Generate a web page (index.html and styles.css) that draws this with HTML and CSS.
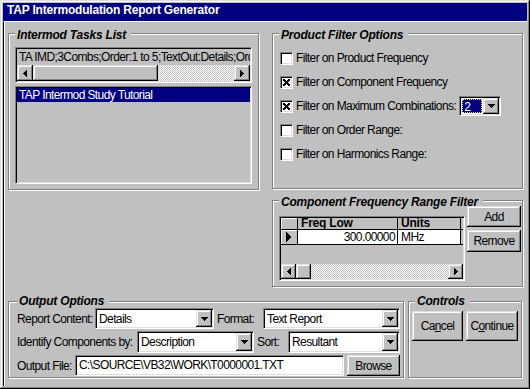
FILE: index.html
```html
<!DOCTYPE html>
<html lang="en">
  <head>
    <meta charset="UTF-8" />
    <meta name="viewport" content="width=device-width, initial-scale=1.0" />
    <title>TAP Intermodulation Report Generator</title>
    <link rel="stylesheet" href="styles.css">
  </head>
  <body>
    <div class="window">
      <div class="titlebar">TAP Intermodulation Report Generator</div>
      <div class="client">
        <div class="top-row">
          <!-- Tasks -->
          <fieldset class="group tasks">
            <legend>Intermod Tasks List</legend>
            <div class="task-line sunken">
              <div class="task-text">TA IMD;3Combs;Order:1 to 5;TextOut:Details;Order:1 to 5</div>
              <div class="hscroll">
                <span class="sb-btn"><svg width="4" height="7"><polygon points="4,0 4,7 0,3.5" /></svg></span>
                <span class="sb-thumb task-thumb"></span>
                <span class="sb-track"></span>
                <span class="sb-btn"><svg width="4" height="7"><polygon points="0,0 4,3.5 0,7" /></svg></span>
              </div>
            </div>
            <div class="task-list sunken">
              <div class="list-item selected">TAP Intermod Study Tutorial</div>
            </div>
          </fieldset>

          <div class="right-col">
            <!-- Product filters -->
            <fieldset class="group filters">
              <legend>Product Filter Options</legend>
              <div class="filter-list">
                <div class="filter-row"><span class="check"></span>Filter on Product Frequency</div>
                <div class="filter-row">
                  <span class="check"><svg width="7" height="7"><path d="M0 0L7 7M7 0L0 7" /></svg></span>Filter on Component Frequency
                </div>
                <div class="filter-row">
                  <span class="check"><svg width="7" height="7"><path d="M0 0L7 7M7 0L0 7" /></svg></span>Filter on Maximum Combinations:
                  <div class="combo combo-max">
                    <span class="combo-value"><span class="focus-val">2</span></span>
                    <span class="drop-btn"><svg width="7" height="4"><polygon points="0,0 7,0 3.5,4" /></svg></span>
                  </div>
                </div>
                <div class="filter-row"><span class="check"></span>Filter on Order Range:</div>
                <div class="filter-row"><span class="check"></span>Filter on Harmonics Range:</div>
              </div>
            </fieldset>

            <!-- Frequency range -->
            <fieldset class="group range">
              <legend>Component Frequency Range Filter</legend>
              <div class="range-body">
                <div class="grid">
                  <div class="grid-row head">
                    <span class="cell sel"></span>
                    <span class="cell freq">Freq Low</span>
                    <span class="cell units">Units</span>
                  </div>
                  <div class="grid-row data">
                    <span class="cell sel"><svg width="6" height="10"><polygon points="0,0 6,5 0,10" /></svg></span>
                    <span class="cell freq num">300.00000</span>
                    <span class="cell units">MHz</span>
                  </div>
                  <div class="grid-empty"></div>
                  <div class="hscroll grid-scroll">
                    <span class="sb-btn"><svg width="4" height="7"><polygon points="4,0 4,7 0,3.5" /></svg></span>
                    <span class="sb-thumb grid-thumb"></span>
                    <span class="sb-track"></span>
                    <span class="sb-btn"><svg width="4" height="7"><polygon points="0,0 4,3.5 0,7" /></svg></span>
                  </div>
                </div>
                <div class="range-buttons">
                  <button class="btn btn-add">Add</button>
                  <button class="btn btn-remove">Remove</button>
                </div>
              </div>
            </fieldset>
          </div>
        </div>

        <div class="bottom-row">
          <!-- Output -->
          <fieldset class="group output">
            <legend>Output Options</legend>
            <div class="out-rows">
              <div class="out-row row-1">
                <span class="lbl lbl-report">Report Content:</span>
                <div class="combo combo-report">
                  <span class="combo-value">Details</span>
                  <span class="drop-btn"><svg width="7" height="4"><polygon points="0,0 7,0 3.5,4" /></svg></span>
                </div>
                <span class="lbl lbl-format">Format:</span>
                <div class="combo combo-grow">
                  <span class="combo-value">Text Report</span>
                  <span class="drop-btn"><svg width="7" height="4"><polygon points="0,0 7,0 3.5,4" /></svg></span>
                </div>
              </div>
              <div class="out-row row-2">
                <span class="lbl lbl-ident">Identify Components by:</span>
                <div class="combo combo-ident">
                  <span class="combo-value">Description</span>
                  <span class="drop-btn"><svg width="7" height="4"><polygon points="0,0 7,0 3.5,4" /></svg></span>
                </div>
                <span class="lbl lbl-sort">Sort:</span>
                <div class="combo combo-grow">
                  <span class="combo-value">Resultant</span>
                  <span class="drop-btn"><svg width="7" height="4"><polygon points="0,0 7,0 3.5,4" /></svg></span>
                </div>
              </div>
              <div class="out-row row-3">
                <span class="lbl lbl-file">Output File:</span>
                <div class="textbox">C:\SOURCE\VB32\WORK\T0000001.TXT</div>
                <button class="btn btn-browse">Browse</button>
              </div>
            </div>
          </fieldset>

          <!-- Controls -->
          <fieldset class="group controls">
            <legend>Controls</legend>
            <div class="control-buttons">
              <button class="btn btn-big">Ca<u>n</u>cel</button>
              <button class="btn btn-big btn-continue">C<u>o</u>ntinue</button>
            </div>
          </fieldset>
        </div>
      </div>
    </div>
  </body>
</html>
```

FILE: styles.css
```css
body {
  margin: 0;
  background: #c0c0c0;
  font: 12px "Liberation Sans", Arial, sans-serif;
  letter-spacing: -0.6px;
  color: #000;
}
svg {
  display: block;
  fill: #000;
  shape-rendering: crispEdges;
}

/* window frame */
.window {
  width: 530px;
  height: 389px;
  box-sizing: border-box;
  padding: 3px;
  display: flex;
  flex-direction: column;
  box-shadow: inset -1px -1px #000, inset 1px 1px #dfdfdf, inset -2px -2px #808080, inset 2px 2px #fff;
}
.titlebar {
  height: 18px;
  line-height: 18px;
  padding-left: 4px;
  background: #000080;
  color: #fff;
  font: bold 12px "Liberation Sans", Arial, sans-serif;
  letter-spacing: -0.2px;
}
.client {
  flex: 1;
  border-top: 1px solid #fff;
  border-left: 1px solid #000;
  box-shadow: inset 1px 0 #fff;
  padding: 3px 0 0 4px;
}
.top-row {
  display: flex;
  gap: 13px;
}
.right-col {
  display: flex;
  flex-direction: column;
  gap: 3px;
  width: 251px;
}
.bottom-row {
  display: flex;
  gap: 4px;
  margin-top: 7px;
}

/* group boxes */
.group {
  margin: 0;
  padding: 0 6px;
  border: 1px solid #808080;
  box-shadow: inset 1px 1px #fff, 1px 1px #fff;
  box-sizing: border-box;
  min-width: 0;
}
.group legend {
  padding: 3px 5px 0 2px;
  line-height: 13px;
  font: bold italic 12px "Liberation Sans", Arial, sans-serif;
  letter-spacing: -0.2px;
  background: #c0c0c0;
}
.output legend, .controls legend {
  padding-top: 0;
}
.tasks {
  width: 251px;
  height: 165px;
}
.filters {
  height: 164px;
}
.range {
  height: 95px;
  padding-right: 1px;
}
.output {
  width: 396px;
  height: 84px;
  padding: 0 3px 0 8px;
}
.controls {
  width: 114px;
  height: 84px;
  padding: 0 3px;
}
.controls legend {
  margin-left: 3px;
}

/* 3d edges */
.sunken {
  border: 1px solid;
  border-color: #808080 #fff #fff #808080;
  box-shadow: inset 1px 1px #000, inset -1px -1px #dfdfdf;
  box-sizing: border-box;
  padding: 1px;
}
.sb-btn, .sb-thumb, .drop-btn, .btn {
  background: #c0c0c0;
  box-shadow: inset -1px -1px #000, inset 1px 1px #dfdfdf, inset -2px -2px #808080, inset 2px 2px #fff;
}

/* tasks list */
.task-line {
  margin-top: 5px;
  width: 237px;
  height: 36px;
}
.task-text {
  height: 16px;
  line-height: 16px;
  padding-left: 2px;
  white-space: nowrap;
  overflow: hidden;
}
.hscroll {
  display: flex;
  height: 16px;
}
.sb-btn {
  width: 16px;
  flex-shrink: 0;
  display: flex;
  align-items: center;
  justify-content: center;
}
.sb-track {
  flex: 1;
  background: repeating-conic-gradient(#c0c0c0 0 25%, #fff 0 50%) 0 0 / 2px 2px;
}
.task-thumb {
  width: 125px;
}
.task-list {
  margin-top: 3px;
  width: 237px;
  height: 98px;
}
.list-item {
  height: 14px;
  line-height: 14px;
  padding-left: 2px;
}
.list-item.selected {
  background: #000080;
  color: #fff;
}

/* product filters */
.filter-list {
  margin-top: 4px;
}
.filter-row {
  height: 24px;
  display: flex;
  align-items: center;
  gap: 3px;
  margin-left: 1px;
  white-space: nowrap;
}
.check {
  flex-shrink: 0;
  width: 13px;
  height: 13px;
  box-sizing: border-box;
  background: #fff;
  border: 1px solid;
  border-color: #808080 #fff #fff #808080;
  box-shadow: inset 1px 1px #000, inset -1px -1px #dfdfdf;
  display: flex;
  align-items: center;
  justify-content: center;
}
.check path {
  stroke: #000;
  stroke-width: 1.8;
}

/* combo boxes */
.combo {
  display: flex;
  height: 100%;
  background: #fff;
  border: 1px solid;
  border-color: #808080 #fff #fff #808080;
  box-shadow: inset 1px 1px #000, inset -1px -1px #dfdfdf;
  box-sizing: border-box;
  padding: 1px;
  flex-shrink: 0;
}
.combo-value {
  flex: 1;
  display: flex;
  align-items: center;
  padding-left: 2px;
  white-space: nowrap;
  overflow: hidden;
}
.drop-btn {
  width: 16px;
  flex-shrink: 0;
  display: flex;
  align-items: center;
  justify-content: center;
}
.combo-max {
  width: 42px;
  height: 20px;
  margin-left: auto;
  margin-right: 19px;
}
.combo-max .combo-value {
  padding: 1px;
}
.focus-val {
  flex: 1;
  height: 100%;
  box-sizing: border-box;
  padding-left: 1px;
  line-height: 14px;
  background: #000080;
  color: #fff;
  border: 1px dotted #e8e890;
}

/* range grid */
.range-body {
  display: flex;
  gap: 2px;
}
.grid {
  margin-top: 7px;
  width: 186px;
  height: 65px;
  display: flex;
  flex-direction: column;
  border: 1px solid;
  border-color: #808080 #fff #fff #808080;
  box-shadow: inset 1px 1px #000, inset -1px -1px #dfdfdf;
  box-sizing: border-box;
  padding: 1px;
}
.grid-row {
  display: flex;
  border-bottom: 1px solid #000;
}
.grid-row.head {
  height: 11px;
  font: bold 12px/11px "Liberation Sans", Arial, sans-serif;
  letter-spacing: -0.2px;
}
.grid-row.data {
  height: 14px;
  line-height: 14px;
}
.cell {
  border-right: 1px solid #000;
  white-space: nowrap;
}
.cell.sel {
  width: 16px;
  box-shadow: inset 1px 1px #fff;
  display: flex;
  align-items: center;
  justify-content: center;
}
.cell.freq {
  width: 100px;
  padding-left: 3px;
  box-sizing: border-box;
}
.cell.units {
  width: 63px;
  padding-left: 3px;
  box-sizing: border-box;
}
.data .freq, .data .units {
  background: #fff;
}
.cell.num {
  text-align: right;
  padding: 0 2px 0 0;
}
.grid-empty {
  flex: 1;
}
.grid-scroll {
  height: 15px;
}
.grid-scroll .sb-btn {
  width: 15px;
}
.grid-thumb {
  width: 15px;
}
.range-buttons {
  margin-top: -3px;
  display: flex;
  flex-direction: column;
  gap: 3px;
}

/* buttons */
.btn {
  border: 0;
  padding: 0;
  font: 12px "Liberation Sans", Arial, sans-serif;
  letter-spacing: -0.6px;
  color: #000;
}
.btn-add {
  width: 54px;
  height: 21px;
}
.btn-remove {
  width: 54px;
  height: 22px;
}

/* output options */
.out-rows {
  display: flex;
  flex-direction: column;
  gap: 2px;
}
.out-row {
  display: flex;
  align-items: center;
  height: 21px;
  white-space: nowrap;
}
.out-row.row-2 {
  height: 22px;
}
.lbl {
  flex-shrink: 0;
}
.lbl-report {
  width: 78px;
}
.combo-report {
  width: 119px;
}
.lbl-format {
  width: 46px;
  margin-left: 3px;
}
.lbl-ident {
  width: 120px;
}
.combo-ident {
  width: 117px;
}
.lbl-sort {
  width: 34px;
  padding-left: 3px;
  box-sizing: border-box;
}
.combo-grow {
  flex: 1;
}
.lbl-file {
  width: 58px;
}
.textbox {
  width: 269px;
  height: 21px;
  line-height: 19px;
  padding-left: 3px;
  background: #fff;
  border: 1px solid;
  border-color: #808080 #fff #fff #808080;
  box-shadow: inset 1px 1px #000, inset -1px -1px #dfdfdf;
  box-sizing: border-box;
  overflow: hidden;
  white-space: nowrap;
}
.btn-browse {
  width: 53px;
  height: 21px;
  margin-left: 3px;
}

/* controls */
.control-buttons {
  display: flex;
  gap: 3px;
  margin-top: 3px;
}
.btn-big {
  width: 52px;
  height: 30px;
}
.btn-continue {
  width: 53px;
}
```
